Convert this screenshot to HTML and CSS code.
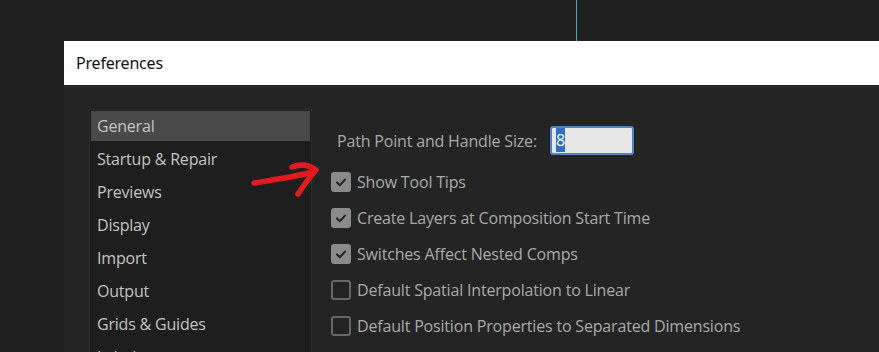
FILE: index.html
```html
<!DOCTYPE html>
<html lang="en">
<head>
    <meta charset="UTF-8">
    <meta name="viewport" content="width=device-width, initial-scale=1.0">
    <title>Preferences</title>
    <link rel="stylesheet" href="styles.css">
</head>
<body>
    <div class="backdrop">
        <div class="guide-line"></div>
    </div>

    <div class="dialog">
        <div class="titlebar">Preferences</div>

        <div class="dialog-body">
            <ul class="nav">
                <li class="selected">General</li>
                <li>Startup &amp; Repair</li>
                <li>Previews</li>
                <li>Display</li>
                <li>Import</li>
                <li>Output</li>
                <li>Grids &amp; Guides</li>
                <li>Labels</li>
            </ul>

            <div class="settings">
                <div class="field-row">
                    <label>Path Point and Handle Size:</label>
                    <div class="num-input"><span class="sel">8</span></div>
                </div>

                <div class="check-row">
                    <span class="box checked"><svg viewBox="0 0 20 20"><path d="M5 10.5l3.5 3.5 6.5-7"/></svg></span>
                    <span>Show Tool Tips</span>
                </div>
                <div class="check-row">
                    <span class="box checked"><svg viewBox="0 0 20 20"><path d="M5 10.5l3.5 3.5 6.5-7"/></svg></span>
                    <span>Create Layers at Composition Start Time</span>
                </div>
                <div class="check-row">
                    <span class="box checked"><svg viewBox="0 0 20 20"><path d="M5 10.5l3.5 3.5 6.5-7"/></svg></span>
                    <span>Switches Affect Nested Comps</span>
                </div>
                <div class="check-row">
                    <span class="box"></span>
                    <span>Default Spatial Interpolation to Linear</span>
                </div>
                <div class="check-row">
                    <span class="box"></span>
                    <span>Default Position Properties to Separated Dimensions</span>
                </div>
                <div class="check-row">
                    <span class="box"></span>
                    <span>Preserve Constant Vertex and Feather Count when Editing Masks</span>
                </div>
            </div>
        </div>
    </div>

    <!-- hand-drawn annotation -->
    <svg class="scribble" width="80" height="44" viewBox="0 0 80 44">
        <path d="M6 23 C 25 20, 45 17, 65 12"/>
        <path d="M44 7 C 52 4, 61 5, 68 10 C 61 18, 55 26, 50 34"/>
    </svg>
</body>
</html>
```

FILE: styles.css
```css
body {
    margin: 0;
    background: #202020;
    font-family: "Open Sans", "Noto Sans", sans-serif;
    height: 352px;
    overflow: hidden;
    position: relative;
}
.backdrop {
    height: 41px;
}
.guide-line {
    margin-left: 576px;
    width: 1px;
    height: 41px;
    background: #3fa9c0;
}
.dialog {
    margin-left: 64px;
    background: #242424;
    height: 311px;
}
.titlebar {
    height: 44px;
    line-height: 44px;
    background: #ffffff;
    color: #111;
    font-family: "Noto Sans", sans-serif;
    font-size: 16px;
    letter-spacing: -0.2px;
    padding-left: 12px;
}
.dialog-body {
    display: flex;
    padding: 24px 0 0 25px;
}
.nav {
    list-style: none;
    margin: 0;
    padding: 1px;
    width: 219px;
    height: 260px;
    background: #1e1e1e;
    border: 1px solid #2c2c2c;
    border-bottom: none;
    flex-shrink: 0;
}
.nav li {
    height: 30px;
    line-height: 30px;
    margin-bottom: 3px;
    padding-left: 6px;
    color: #c4c4c4;
    font-size: 16px;
    letter-spacing: -0.2px;
}
.nav li.selected {
    background: #4a4a4a;
}
.settings {
    margin-left: 19px;
    padding-top: 17px;
    color: #a9a9a9;
    font-size: 16px;
    letter-spacing: -0.18px;
    white-space: nowrap;
}
.field-row {
    display: flex;
    align-items: center;
    height: 29px;
    padding-left: 6px;
    gap: 13px;
}
.num-input {
    width: 76px;
    height: 25px;
    background: #e6e6e6;
    border: 2px solid #4d85c8;
    border-radius: 3px;
    line-height: 25px;
    padding-left: 4px;
}
.num-input .sel {
    background: #2f6fc4;
    color: #fff;
    padding: 1px 0;
}
.check-row {
    display: flex;
    align-items: center;
    height: 36px;
    gap: 6px;
}
.field-row + .check-row {
    margin-top: 9px;
}
.box {
    width: 16px;
    height: 16px;
    border: 2px solid #676767;
    border-radius: 3px;
    flex-shrink: 0;
}
.box.checked {
    background: #8a8a8a;
    border-color: #8a8a8a;
}
.box svg {
    display: block;
    width: 16px;
    height: 16px;
}
.box svg path {
    fill: none;
    stroke: #262626;
    stroke-width: 2.6;
    stroke-linecap: round;
    stroke-linejoin: round;
}
.scribble {
    position: absolute;
    left: 248px;
    top: 160px;
}
.scribble path {
    fill: none;
    stroke: #e01a1e;
    stroke-width: 5.5;
    stroke-linecap: round;
    stroke-linejoin: round;
}
```
